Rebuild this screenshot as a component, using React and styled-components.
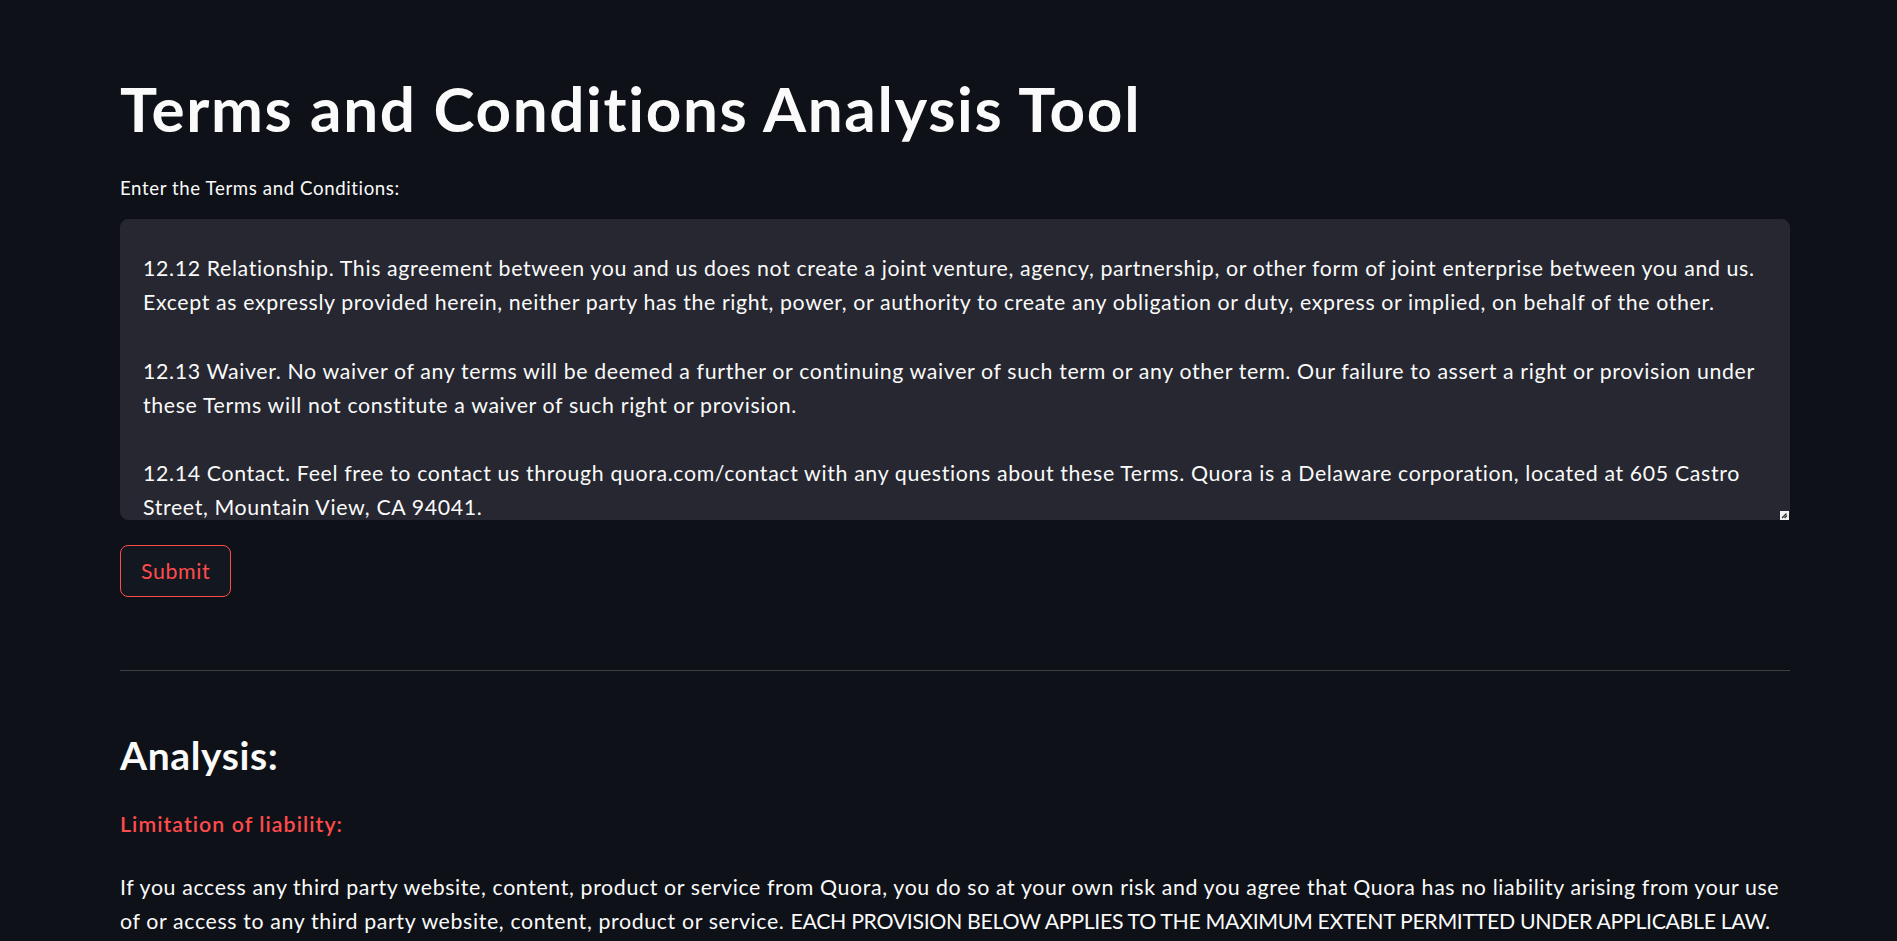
import React from "react";
import styled, { createGlobalStyle } from "styled-components";

const GlobalStyle = createGlobalStyle`
  html, body {
    margin: 0;
    padding: 0;
    background: #0e1117;
    overflow: hidden;
  }
  body {
    font-family: Lato, "Noto Sans", sans-serif;
    color: #fafafa;
  }
`;

const Main = styled.main`
  padding: 71px 107px 0 120px;
  display: flex;
  flex-direction: column;
`;

const Title = styled.h1`
  margin: 0;
  font-size: 62px;
  line-height: 1.2;
  font-weight: 700;
  letter-spacing: 1.65px;
  color: #fafafa;
`;

const FieldLabel = styled.label`
  margin-top: 29px;
  font-size: 18.67px;
  line-height: 28.8px;
  letter-spacing: 0.6px;
  color: #fafafa;
`;

const InputWrap = styled.div`
  position: relative;
  margin-top: 16px;
  display: flex;
`;

const TermsInput = styled.textarea`
  box-sizing: border-box;
  width: 100%;
  height: 301px;
  padding: 31px 22px 22px;
  background: #262730;
  border: 1px solid #262730;
  border-radius: 8px;
  color: #fafafa;
  font-family: Lato, "Noto Sans", sans-serif;
  font-size: 21.33px;
  line-height: 34.13px;
  letter-spacing: 0.63px;
  overflow: hidden;
  resize: none;
  outline: none;
`;

const Resizer = styled.span`
  position: absolute;
  right: 1px;
  bottom: 0;
  width: 9px;
  height: 9px;
  background: #f2f2f2;
  display: flex;
  align-items: center;
  justify-content: center;
  pointer-events: none;
`;

const SubmitButton = styled.button`
  align-self: flex-start;
  margin-top: 25px;
  box-sizing: border-box;
  height: 52px;
  padding: 0 20px;
  display: inline-flex;
  align-items: center;
  background: #131720;
  border: 1px solid #ff4b4b;
  border-radius: 8px;
  color: #ff4b4b;
  font-family: Lato, "Noto Sans", sans-serif;
  font-size: 21.33px;
  letter-spacing: 0.63px;
  cursor: pointer;
`;

const Divider = styled.hr`
  margin: 73px 0 0;
  border: none;
  height: 1px;
  background: rgba(250, 250, 250, 0.2);
`;

const SectionHeading = styled.h2`
  margin: 61px 0 0;
  font-size: 39px;
  line-height: 1.2;
  font-weight: 700;
  letter-spacing: 0.6px;
`;

const ClauseTitle = styled.div`
  margin-top: 28px;
  font-size: 21.33px;
  line-height: 34.13px;
  font-weight: 600;
  letter-spacing: 1.05px;
  color: ${(p) => p.color || "#ff4b4b"};
`;

const Paragraph = styled.p`
  margin: 29px 0 0;
  font-size: 21.33px;
  line-height: 34.13px;
  letter-spacing: 0.63px;
`;

// capitals run wider in Lato than in the original face, tighten them up
const Caps = styled.span`
  letter-spacing: -0.35px;
`;

const TERMS = `12.12 Relationship. This agreement between you and us does not create a joint venture, agency, partnership, or other form of joint enterprise between you and us. Except as expressly provided herein, neither party has the right, power, or authority to create any obligation or duty, express or implied, on behalf of the other.

12.13 Waiver. No waiver of any terms will be deemed a further or continuing waiver of such term or any other term. Our failure to assert a right or provision under these Terms will not constitute a waiver of such right or provision.

12.14 Contact. Feel free to contact us through quora.com/contact with any questions about these Terms. Quora is a Delaware corporation, located at 605 Castro Street, Mountain View, CA 94041.`;

const analysis = [
  {
    title: "Limitation of liability:",
    text: "If you access any third party website, content, product or service from Quora, you do so at your own risk and you agree that Quora has no liability arising from your use of or access to any third party website, content, product or service. ",
    caps: "EACH PROVISION BELOW APPLIES TO THE MAXIMUM EXTENT PERMITTED UNDER APPLICABLE LAW.",
  },
];

export default function App() {
  return (
    <>
      <GlobalStyle />
      <Main>
        <Title>Terms and Conditions Analysis Tool</Title>
        <FieldLabel htmlFor="terms">Enter the Terms and Conditions:</FieldLabel>
        <InputWrap>
          <TermsInput id="terms" defaultValue={TERMS} />
          <Resizer>
            <svg width="7" height="7" viewBox="0 0 7 7">
              <path d="M1 6 L5.5 1.5 M3.5 6 L6 3.5" stroke="#333" strokeWidth="1.4" />
            </svg>
          </Resizer>
        </InputWrap>
        <SubmitButton>Submit</SubmitButton>
        <Divider />
        <SectionHeading>Analysis:</SectionHeading>
        {analysis.map((a) => (
          <React.Fragment key={a.title}>
            <ClauseTitle>{a.title}</ClauseTitle>
            <Paragraph>
              {a.text}
              <Caps>{a.caps}</Caps>
            </Paragraph>
          </React.Fragment>
        ))}
      </Main>
    </>
  );
}
